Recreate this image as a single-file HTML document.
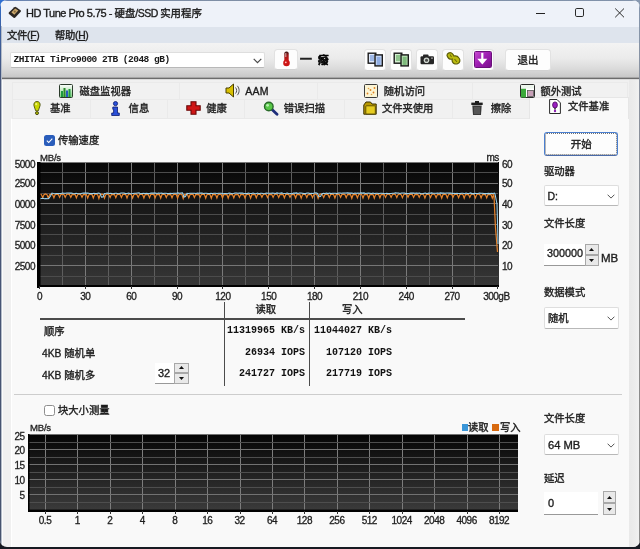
<!DOCTYPE html>
<html lang="zh">
<head>
<meta charset="utf-8">
<title>HD Tune Pro 5.75 - 硬盘/SSD 实用程序</title>
<style>
*{box-sizing:border-box;margin:0;padding:0}
html,body{width:640px;height:549px;overflow:hidden;background:#fff}
body{font-family:"Liberation Sans","Noto Sans CJK SC",sans-serif;font-size:11px;color:#1a1a1a;position:relative}
div,span,svg{position:absolute}
.t{white-space:nowrap;line-height:1;color:#1c1c1c;-webkit-text-stroke:0.35px #1c1c1c}
.btn{background:#fdfdfd;border:1px solid #e2e2e2;border-bottom-color:#d2d2d2;border-radius:3.5px}
.combo{background:#fff;border:1px solid #dedede;border-bottom:1px solid #b8b8b8;border-radius:2px}
.ax{font-size:10px;line-height:10px;color:#1e1e1e;white-space:nowrap;letter-spacing:-0.5px;-webkit-text-stroke:0.3px #1e1e1e}
.mono{font-family:"Liberation Mono","Noto Sans CJK SC",monospace;font-weight:bold;font-size:10px;white-space:nowrap;line-height:1;color:#111}
.lab{font-size:10.3px;white-space:nowrap;line-height:1;color:#1c1c1c;-webkit-text-stroke:0.35px #1c1c1c}
.tab{border:1px solid #eaeaea;border-bottom:none;background:#f1f1f1}
</style>
</head>
<body>
<div id="win" style="left:0;top:0;width:640px;height:549px;background:#8698b0;overflow:hidden;will-change:transform;opacity:0.999">
<div style="left:0;top:0;width:10px;height:10px;background:#2f6fd2"></div>
<div style="left:0;top:530px;width:640px;height:19px;background:#171a22"></div>
<div id="frame" style="left:0;top:0;width:640px;height:547px;background:#f0f0f0;border-radius:7px 8px 7px 7px;overflow:hidden">
<div style="left:0;top:0;width:640px;height:27px;background:#eef2f9"></div>
<div style="left:0;top:0;width:640px;height:1px;background:linear-gradient(90deg,#5f7fb8 0px,#7d8da4 60px,#8192aa 640px)"></div>
<svg style="left:8px;top:6px" width="14" height="13" viewBox="0 0 14 13"><path d="M0.800 6.500L6.300 1.200Q7.200 0.500 8.200 1.200L12.600 4.300Q13.300 5 12.700 5.800L7.300 11.600Q6.500 12.300 5.600 11.700L1 8Q0.300 7.200 0.800 6.500z" fill="#2b2622"/><path d="M3.300 6.300L7.200 2.500L10.300 4.600L6.300 8.800z" fill="#c9a76c"/><circle cx="6.800" cy="5.600" r="1.100" fill="#8a6a3a"/></svg>
<div class="t" style="left:26px;top:8px;font-size:10.4px;color:#1b1b1b"><span style="position:static;font-size:11px;letter-spacing:-0.49px">HD Tune Pro 5.75 - </span>硬盘<span style="position:static;font-size:10.5px;letter-spacing:-0.5px">/SSD </span>实用程序</div>
<div style="left:536px;top:12.6px;width:9px;height:1.1px;background:#222"></div>
<div style="left:575.2px;top:8.1px;width:9px;height:9px;border:1.1px solid #2a2a2a;border-radius:1.8px"></div>
<svg style="left:614px;top:7px" width="12" height="12" viewBox="0 0 12 12"><path d="M1.2 1.500 L10 10.300 M10 1.500 L1.200 10.300" stroke="#2a2a2a" stroke-width="1" fill="none"/></svg>
<div style="left:0;top:26.6px;width:640px;height:16.8px;background:#dee4ed"></div>
<div class="t" style="left:7px;top:30.8px;font-size:10.3px;letter-spacing:-0.3px">文件(<u>F</u>)</div>
<div class="t" style="left:55px;top:30.8px;font-size:10.3px;letter-spacing:-0.3px">帮助(<u>H</u>)</div>
<div style="left:0;top:43.3px;width:640px;height:33.7px;background:linear-gradient(#f3f3f3 0%,#ebebeb 45%,#dbdbdb 75%,#c8c8c8 100%)"></div>
<div style="left:0;top:77px;width:640px;height:1px;background:#a6a6a6"></div><div style="left:0;top:78px;width:640px;height:1px;background:#6c6c6c"></div><div style="left:0;top:79px;width:640px;height:1px;background:#dcdcdc"></div>
<div class="combo" style="left:10px;top:51.5px;width:254.5px;height:16px"></div>
<div class="mono" style="left:13.6px;top:54.7px;font-size:9.5px;letter-spacing:-0.5px;color:#1a1a1a">ZHITAI TiPro9000 2TB (2048 gB)</div>
<svg style="left:252.5px;top:57.5px" width="9" height="6" viewBox="0 0 9 6"><path d="M0.7 0.8 L4.5 4.6 L8.3 0.8" stroke="#4a4a4a" stroke-width="1.2" fill="none"/></svg>
<div class="btn" style="left:274px;top:48.8px;width:23.5px;height:21.4px"></div>
<svg style="left:281.5px;top:51px" width="9" height="16" viewBox="0 0 9 16"><defs><linearGradient id="th" x1="0" y1="0" x2="0" y2="1"><stop offset="0" stop-color="#3a1a1a"/><stop offset="0.35" stop-color="#a01818"/><stop offset="1" stop-color="#d81818"/></linearGradient></defs><rect x="2.300" y="0.600" width="4.400" height="11" rx="2" fill="url(#th)"/><circle cx="4.500" cy="12" r="3.300" fill="#cc1414"/><circle cx="3.800" cy="11.300" r="0.900" fill="#ffc0c0"/><rect x="3.300" y="2" width="1" height="4" fill="#d0b0b0"/></svg>
<div class="t" style="left:299.8px;top:54px;font-size:12.3px;font-weight:bold;color:#222">一</div>
<div class="t" style="left:318px;top:55.3px;font-size:10.6px;font-weight:bold;color:#000;-webkit-text-stroke:0.6px #000">癈</div>
<div class="btn" style="left:363.6px;top:48.5px;width:22.4px;height:22.3px"></div>
<div class="btn" style="left:389.6px;top:48.5px;width:22.4px;height:22.3px"></div>
<div class="btn" style="left:415.6px;top:48.5px;width:22.4px;height:22.3px"></div>
<div class="btn" style="left:441.6px;top:48.5px;width:22.4px;height:22.3px"></div>
<svg style="left:367px;top:52px" width="17" height="16" viewBox="0 0 17 16"><rect x="1.200" y="1.200" width="7.600" height="10" fill="#dfe9fb" stroke="#1a1a1a" stroke-width="1.400"/><path d="M3 4h4M3 6h4M3 8h4" stroke="#5f86d0" stroke-width="1"/><rect x="8" y="2.900" width="7.300" height="11" fill="#c4d6f6" stroke="#1a1a1a" stroke-width="1.400"/><path d="M9.800 6h3.800M9.800 8h3.800M9.800 10h3.800M9.800 12h3.800" stroke="#5f86d0" stroke-width="1"/></svg>
<svg style="left:393px;top:52px" width="17" height="16" viewBox="0 0 17 16"><rect x="1.200" y="1.200" width="7.600" height="10" fill="#d4efd0" stroke="#1a1a1a" stroke-width="1.400"/><path d="M3 4h4M3 6h4M3 8h4" stroke="#4a9a4a" stroke-width="1"/><rect x="8" y="2.900" width="7.300" height="11" fill="#b4dcb0" stroke="#1a1a1a" stroke-width="1.400"/><path d="M9.800 6h3.800M9.800 8h3.800M9.800 10h3.800M9.800 12h3.800" stroke="#4a9a4a" stroke-width="1"/></svg>
<svg style="left:420px;top:54px" width="15" height="11" viewBox="0 0 15 11"><rect x="0.500" y="2.300" width="13.500" height="8" rx="1.200" fill="#262626"/><rect x="3" y="0.500" width="5.500" height="3" rx="0.800" fill="#262626"/><circle cx="6.500" cy="6.200" r="2.800" fill="#cfd6cf"/><circle cx="6.500" cy="6.200" r="1.500" fill="#4a4a4a"/><rect x="11" y="3.500" width="2" height="1.300" fill="#9a9a9a"/></svg>
<svg style="left:445px;top:51px" width="17" height="16" viewBox="0 0 17 16"><path d="M2 4.500c0-2 2.500-3.500 4.500-2.500c1.500 0.800 2 2 2.500 3c2-0.500 4 0.500 5 2c1.500 2 1 4.500-1 5.500c-2 1-4.500 0.500-5.500-1.500c-0.500-1-0.500-2-0.300-2.800c-2 0.300-4.200-0.700-5.200-3.700z" fill="#bcbc10" stroke="#5e5e08" stroke-width="1.200"/><path d="M5 3.500l1.500 2.500M9.500 8l2.500 3" stroke="#70700a" stroke-width="1.100"/></svg>
<div class="btn" style="left:471.6px;top:48.5px;width:22.6px;height:22.3px"></div>
<div style="left:474px;top:51px;width:18px;height:17px;background:linear-gradient(135deg,#c84ad0 0%,#a020b4 45%,#7a0e8c 100%);border:1px solid #6a0f7a;border-radius:1.500px"></div>
<svg style="left:476px;top:52px" width="14" height="14" viewBox="0 0 14 14"><path d="M6.300 0.800v7" stroke="#fff" stroke-width="2.200" fill="none"/><path d="M1.300 6.800h10l-5 5.600z" fill="#fff"/></svg>
<div class="btn" style="left:505px;top:48.6px;width:46px;height:22.4px"></div>
<div class="t" style="left:517.5px;top:55px;font-size:10.5px">退出</div>
<div class="tab" style="left:12px;top:82px;width:168px;height:18px"></div>
<div class="tab" style="left:179px;top:82px;width:139px;height:18px"></div>
<div class="tab" style="left:317px;top:82px;width:156px;height:18px"></div>
<div class="tab" style="left:472px;top:82px;width:156px;height:18px"></div>
<div class="tab" style="left:12px;top:99px;width:79px;height:20px"></div>
<div class="tab" style="left:90px;top:99px;width:78px;height:20px"></div>
<div class="tab" style="left:167px;top:99px;width:78px;height:20px"></div>
<div class="tab" style="left:244px;top:99px;width:101px;height:20px"></div>
<div class="tab" style="left:344px;top:99px;width:109px;height:20px"></div>
<div class="tab" style="left:452px;top:99px;width:79px;height:20px"></div>
<div style="left:628.5px;top:80px;width:10.2px;height:467px;background:linear-gradient(90deg,#e9e9e9 0px,#ececec 5px,#f1f1f1 10px)"></div>
<div style="left:10.5px;top:118px;width:618px;height:429px;background:#f9f9f9;border-left:1px solid #fff;border-top:1px solid #e9e9e9"></div>
<div style="left:529px;top:97px;width:99.5px;height:22px;background:#f9f9f9;border:1px solid #e6e6e6;border-bottom:none"></div>
<svg style="left:59px;top:84px" width="14" height="14" viewBox="0 0 14 14"><defs><linearGradient id="gi1" x1="0" y1="0" x2="0" y2="1"><stop offset="0" stop-color="#ffffff"/><stop offset="1" stop-color="#7fd07f"/></linearGradient></defs><rect x="0.5" y="0.5" width="13" height="13" rx="1" fill="url(#gi1)" stroke="#2a3a2a"/><rect x="2" y="7" width="2" height="6" fill="#1e9a3e"/><rect x="4.500" y="4" width="2" height="9" fill="#2a8a2a"/><rect x="7" y="6.500" width="2" height="6.500" fill="#2a5ac0"/><rect x="9.500" y="5" width="2" height="8" fill="#1e9a3e"/></svg>
<div class="t" style="left:79.5px;top:86.6px;font-size:10.3px">磁盘监视器</div>
<svg style="left:225px;top:83px" width="15" height="15" viewBox="0 0 15 15"><path d="M1 5h3l4.500-4v13l-4.500-4h-3z" fill="#d8c000" stroke="#4a4000" stroke-width="1"/><path d="M10.500 4.500c1.500 1.500 1.500 4.500 0 6M12.300 2.800c2.400 2.600 2.400 6.800 0 9.400" stroke="#555" stroke-width="1" fill="none"/></svg>
<div class="t" style="left:245.3px;top:85.8px;font-size:10.5px;letter-spacing:0.2px">AAM</div>
<svg style="left:364px;top:84px" width="14" height="14" viewBox="0 0 14 14"><rect x="0.5" y="0.5" width="13" height="13" rx="1" fill="#fbf4d4" stroke="#3a3a3a"/><circle cx="3.500" cy="9.500" r="0.900" fill="#e08020"/><circle cx="6.500" cy="6" r="0.900" fill="#e08020"/><circle cx="9.500" cy="8.500" r="0.900" fill="#e08020"/><circle cx="10.500" cy="4" r="0.900" fill="#e08020"/><circle cx="4.500" cy="4.500" r="0.800" fill="#e0a040"/><circle cx="7.500" cy="10.500" r="0.800" fill="#e0a040"/></svg>
<div class="t" style="left:383.8px;top:86.6px;font-size:10.3px">随机访问</div>
<svg style="left:520px;top:84px" width="15" height="14" viewBox="0 0 15 14"><rect x="0.5" y="0.5" width="14" height="13" rx="1" fill="#fff" stroke="#2a2a2a"/><rect x="1" y="4.500" width="5" height="9" fill="#3aa83a"/><rect x="1" y="1" width="13" height="3.500" fill="#eef6ee"/><rect x="7.500" y="6.500" width="6" height="6" fill="#c8a0b8" stroke="#555" stroke-width="0.800"/></svg>
<div class="t" style="left:540.4px;top:86.6px;font-size:10.3px">额外测试</div>
<svg style="left:33px;top:101px" width="8" height="14" viewBox="0 0 8 14"><path d="M4 0.500C6.300 0.500 7.300 2.300 7.100 4.300C6.900 6.300 5.600 8 5.300 9.800L2.700 9.800C2.400 8 1.100 6.300 0.900 4.300C0.700 2.300 1.700 0.500 4 0.500z" fill="#c9d600" stroke="#4a4f0a" stroke-width="0.900"/><circle cx="3.200" cy="3.200" r="1.100" fill="#eef27a"/><circle cx="4" cy="12.100" r="1.500" fill="#b9c400" stroke="#3a3a0a" stroke-width="0.900"/></svg>
<div class="t" style="left:50px;top:104px;font-size:10.3px">基准</div>
<svg style="left:111px;top:100.500px" width="9" height="15" viewBox="0 0 9 15"><circle cx="4.500" cy="2.600" r="2.100" fill="#2a50d8" stroke="#0a1a70" stroke-width="0.800"/><path d="M1.800 6h4.700v6h1.800v2.500h-7.600v-2.500h1.900v-3.700h-0.800z" fill="#2a50d8" stroke="#0a1a70" stroke-width="0.800"/></svg>
<div class="t" style="left:128.6px;top:104px;font-size:10.3px">信息</div>
<svg style="left:186px;top:101px" width="15" height="14" viewBox="0 0 15 14"><path d="M5 0.800h5v4h4.200v4.500h-4.200v4h-5v-4h-4.200v-4.500h4.200z" fill="#cf1616" stroke="#6a0808" stroke-width="1.1"/></svg>
<div class="t" style="left:206.2px;top:104px;font-size:10.3px">健康</div>
<svg style="left:263px;top:100.500px" width="16" height="15" viewBox="0 0 16 15"><path d="M8.500 8L14 13.200" stroke="#1e2e7a" stroke-width="2.800" stroke-linecap="round"/><circle cx="5.800" cy="5.500" r="4.300" fill="#58c848" stroke="#2a6a2a" stroke-width="1.400"/><circle cx="4.600" cy="4.300" r="1.400" fill="#b8f0b0"/></svg>
<div class="t" style="left:283.8px;top:104px;font-size:10.3px">错误扫描</div>
<svg style="left:362.500px;top:101px" width="14" height="14" viewBox="0 0 14 14"><path d="M0.800 4l2.200-3h4.500l1.500 2h4.200v10.200h-12.400z" fill="#b89800" stroke="#3a3000" stroke-width="1"/><rect x="2.800" y="4.800" width="9.500" height="8.200" rx="0.800" fill="#e6cc20" stroke="#4a3e00" stroke-width="0.800"/></svg>
<div class="t" style="left:381.9px;top:104px;font-size:10.3px">文件夹使用</div>
<svg style="left:471px;top:101px" width="12" height="14" viewBox="0 0 12 14"><rect x="0.300" y="1.600" width="11.400" height="2.400" fill="#1e1e1e"/><rect x="4" y="0" width="4" height="2" fill="#1e1e1e"/><path d="M1.300 4.600h9.400l-0.700 9.400h-8z" fill="#3a3a3a"/><path d="M4 6v7M6 6v7M8 6v7" stroke="#8a8a8a" stroke-width="0.700"/></svg>
<div class="t" style="left:490.8px;top:104px;font-size:10.3px">擦除</div>
<svg style="left:549px;top:98.500px" width="12" height="15" viewBox="0 0 12 15"><path d="M0.600 0.500h7.400l3.400 3.400v10.600h-10.800z" fill="#fff" stroke="#2a2a2a" stroke-width="1"/><ellipse cx="6" cy="6" rx="2.400" ry="3.100" fill="#9a20c0" stroke="#4a0a5a" stroke-width="0.800"/><rect x="5" y="9" width="2" height="1.600" fill="#555"/><circle cx="6" cy="12" r="1.200" fill="#8a20b0"/></svg>
<div class="t" style="left:568px;top:101.6px;font-size:10.3px">文件基准</div>
<div style="left:44px;top:134.7px;width:11px;height:11px;background:#2a5dbb;border-radius:2.500px"></div>
<svg style="left:44px;top:134.7px" width="11" height="11" viewBox="0 0 11 11"><path d="M2.800 5.700L4.700 7.500L8.300 3.600" stroke="#fff" stroke-width="1.100" fill="none"/></svg>
<div class="lab" style="left:58px;top:136.3px">传输速度</div>
<div class="ax" style="left:40px;top:153.1px;letter-spacing:-0.25px;font-size:9.6px">MB/s</div>
<div class="ax" style="left:486.5px;top:152.6px">ms</div>
<svg style="left:39px;top:162px" width="460" height="125" viewBox="0 0 460 125"><defs><linearGradient id="g1" x1="0" y1="0" x2="0" y2="1"><stop offset="0" stop-color="#060606"/><stop offset="1" stop-color="#373737"/></linearGradient></defs><rect x="0" y="0" width="460" height="125" fill="url(#g1)"/><line x1="23.5" y1="0" x2="23.5" y2="124" stroke="#5e5e5e" stroke-width="1"/><line x1="46.5" y1="0" x2="46.5" y2="124" stroke="#7a7a7a" stroke-width="1"/><line x1="69.5" y1="0" x2="69.5" y2="124" stroke="#5e5e5e" stroke-width="1"/><line x1="92.5" y1="0" x2="92.5" y2="124" stroke="#7a7a7a" stroke-width="1"/><line x1="115.5" y1="0" x2="115.5" y2="124" stroke="#5e5e5e" stroke-width="1"/><line x1="138.5" y1="0" x2="138.5" y2="124" stroke="#7a7a7a" stroke-width="1"/><line x1="160.5" y1="0" x2="160.5" y2="124" stroke="#5e5e5e" stroke-width="1"/><line x1="183.5" y1="0" x2="183.5" y2="124" stroke="#7a7a7a" stroke-width="1"/><line x1="206.5" y1="0" x2="206.5" y2="124" stroke="#5e5e5e" stroke-width="1"/><line x1="229.5" y1="0" x2="229.5" y2="124" stroke="#7a7a7a" stroke-width="1"/><line x1="252.5" y1="0" x2="252.5" y2="124" stroke="#5e5e5e" stroke-width="1"/><line x1="275.5" y1="0" x2="275.5" y2="124" stroke="#7a7a7a" stroke-width="1"/><line x1="298.5" y1="0" x2="298.5" y2="124" stroke="#5e5e5e" stroke-width="1"/><line x1="321.5" y1="0" x2="321.5" y2="124" stroke="#7a7a7a" stroke-width="1"/><line x1="344.5" y1="0" x2="344.5" y2="124" stroke="#5e5e5e" stroke-width="1"/><line x1="367.5" y1="0" x2="367.5" y2="124" stroke="#7a7a7a" stroke-width="1"/><line x1="390.5" y1="0" x2="390.5" y2="124" stroke="#5e5e5e" stroke-width="1"/><line x1="413.5" y1="0" x2="413.5" y2="124" stroke="#7a7a7a" stroke-width="1"/><line x1="435.5" y1="0" x2="435.5" y2="124" stroke="#5e5e5e" stroke-width="1"/><line x1="0" y1="0.5" x2="459" y2="0.5" stroke="#767676" stroke-width="1"/><line x1="0" y1="10.5" x2="459" y2="10.5" stroke="#4c4c4c" stroke-width="1"/><line x1="0" y1="21.5" x2="459" y2="21.5" stroke="#767676" stroke-width="1"/><line x1="0" y1="31.5" x2="459" y2="31.5" stroke="#4c4c4c" stroke-width="1"/><line x1="0" y1="41.5" x2="459" y2="41.5" stroke="#767676" stroke-width="1"/><line x1="0" y1="52.5" x2="459" y2="52.5" stroke="#4c4c4c" stroke-width="1"/><line x1="0" y1="62.5" x2="459" y2="62.5" stroke="#767676" stroke-width="1"/><line x1="0" y1="72.5" x2="459" y2="72.5" stroke="#4c4c4c" stroke-width="1"/><line x1="0" y1="83.5" x2="459" y2="83.5" stroke="#767676" stroke-width="1"/><line x1="0" y1="93.5" x2="459" y2="93.5" stroke="#4c4c4c" stroke-width="1"/><line x1="0" y1="103.5" x2="459" y2="103.5" stroke="#767676" stroke-width="1"/><line x1="0" y1="114.5" x2="459" y2="114.5" stroke="#4c4c4c" stroke-width="1"/><polyline fill="none" stroke="#e8842c" stroke-width="1.2" points="0.8,32.0 2.4,32.6 3.7,35.7 5.0,32.6 6.4,31.9 8.0,32.6 9.3,36.1 10.6,32.6 12.0,32.1 13.6,32.6 14.9,35.9 16.2,32.6 17.7,32.2 19.3,32.6 20.6,35.4 21.9,32.6 23.3,32.2 24.9,32.6 26.2,35.3 27.5,32.6 28.9,32.0 30.5,32.6 31.8,35.4 33.1,32.6 34.5,32.4 36.1,32.6 37.4,35.8 38.7,32.6 40.1,32.0 41.7,32.6 43.0,35.4 44.3,32.6 45.8,32.5 47.4,32.6 48.7,36.1 50.0,32.6 51.4,32.1 53.0,32.6 54.3,36.0 55.6,32.6 57.0,31.9 58.6,32.6 59.9,36.5 61.2,32.6 62.6,32.1 64.2,32.6 65.5,36.3 66.8,32.6 68.2,32.0 69.8,32.6 71.1,35.5 72.4,32.6 73.9,32.4 75.5,32.6 76.8,35.7 78.1,32.6 79.5,32.2 81.1,32.6 82.4,35.5 83.7,32.6 85.1,32.1 86.7,32.6 88.0,36.1 89.3,32.6 90.7,31.9 92.3,32.6 93.6,36.0 94.9,32.6 96.3,32.0 97.9,32.6 99.2,35.4 100.5,32.6 102.0,32.2 103.6,32.6 104.9,36.1 106.2,32.6 107.6,32.3 109.2,32.6 110.5,35.7 111.8,32.6 113.2,32.1 114.8,32.6 116.1,35.8 117.4,32.6 118.8,32.3 120.4,32.6 121.7,36.3 123.0,32.6 124.4,32.2 126.0,32.6 127.3,35.6 128.6,32.6 130.1,32.4 131.7,32.6 133.0,35.9 134.3,32.6 135.7,32.1 137.3,32.6 138.6,36.2 139.9,32.6 141.3,32.0 142.9,32.6 144.2,36.5 145.5,32.6 146.9,32.4 148.5,32.6 149.8,35.8 151.1,32.6 152.5,32.2 154.1,32.6 155.4,35.5 156.7,32.6 158.2,32.3 159.8,32.6 161.1,35.3 162.4,32.6 163.8,32.2 165.4,32.6 166.7,36.2 168.0,32.6 169.4,32.1 171.0,32.6 172.3,36.4 173.6,32.6 175.0,32.3 176.6,32.6 177.9,36.1 179.2,32.6 180.6,32.2 182.2,32.6 183.5,36.0 184.8,32.6 186.3,32.5 187.9,32.6 189.2,36.3 190.5,32.6 191.9,32.3 193.5,32.6 194.8,35.9 196.1,32.6 197.5,32.3 199.1,32.6 200.4,35.4 201.7,32.6 203.1,32.5 204.7,32.6 206.0,36.1 207.3,32.6 208.7,32.1 210.3,32.6 211.6,36.3 212.9,32.6 214.4,32.3 216.0,32.6 217.3,35.8 218.6,32.6 220.0,32.2 221.6,32.6 222.9,35.3 224.2,32.6 225.6,32.0 227.2,32.6 228.5,35.5 229.8,32.6 231.2,32.4 232.8,32.6 234.1,35.4 235.4,32.6 236.8,32.0 238.4,32.6 239.7,35.5 241.0,32.6 242.5,32.4 244.1,32.6 245.4,35.8 246.7,32.6 248.1,32.2 249.7,32.6 251.0,35.4 252.3,32.6 253.7,32.4 255.3,32.6 256.6,36.0 257.9,32.6 259.3,32.4 260.9,32.6 262.2,36.3 263.5,32.6 264.9,32.1 266.5,32.6 267.8,35.6 269.1,32.6 270.6,32.4 272.2,32.6 273.5,35.7 274.8,32.6 276.2,32.0 277.8,32.6 279.1,36.4 280.4,32.6 281.8,32.0 283.4,32.6 284.7,35.5 286.0,32.6 287.4,32.2 289.0,32.6 290.3,35.6 291.6,32.6 293.0,32.1 294.6,32.6 295.9,36.0 297.2,32.6 298.7,32.2 300.3,32.6 301.6,35.3 302.9,32.6 304.3,32.2 305.9,32.6 307.2,35.7 308.5,32.6 309.9,32.3 311.5,32.6 312.8,36.4 314.1,32.6 315.5,32.3 317.1,32.6 318.4,35.9 319.7,32.6 321.1,31.9 322.7,32.6 324.0,36.1 325.3,32.6 326.8,32.4 328.4,32.6 329.7,36.4 331.0,32.6 332.4,32.4 334.0,32.6 335.3,36.3 336.6,32.6 338.0,32.1 339.6,32.6 340.9,35.8 342.2,32.6 343.6,32.3 345.2,32.6 346.5,35.4 347.8,32.6 349.2,31.9 350.8,32.6 352.1,35.4 353.4,32.6 354.9,32.0 356.5,32.6 357.8,35.6 359.1,32.6 360.5,31.9 362.1,32.6 363.4,35.7 364.7,32.6 366.1,32.0 367.7,32.6 369.0,35.3 370.3,32.6 371.7,32.1 373.3,32.6 374.6,35.4 375.9,32.6 377.3,32.4 378.9,32.6 380.2,35.3 381.5,32.6 383.0,32.0 384.6,32.6 385.9,36.0 387.2,32.6 388.6,32.1 390.2,32.6 391.5,35.6 392.8,32.6 394.2,32.0 395.8,32.6 397.1,35.7 398.4,32.6 399.8,32.5 401.4,32.6 402.7,36.3 404.0,32.6 405.4,32.2 407.0,32.6 408.3,35.9 409.6,32.6 411.1,32.0 412.7,32.6 414.0,35.4 415.3,32.6 416.7,32.1 418.3,32.6 419.6,35.7 420.9,32.6 422.3,32.0 423.9,32.6 425.2,36.3 426.5,32.6 427.9,32.5 429.5,32.6 430.8,35.3 432.1,32.6 433.5,32.0 435.1,32.6 436.4,35.9 437.7,32.6 439.2,31.9 440.8,32.6 442.1,36.0 443.4,32.6 444.8,32.5 446.4,32.6 447.7,35.9 449.0,32.6 450.4,32.3 452.0,32.6 453.3,36.3 454.6,32.6 454.0,32.5 455.0,34.0 456.5,66.0 458.5,90.0"/><polyline fill="none" stroke="#9ad2ee" stroke-width="1.05" points="0.5,40.0 1.0,36.3 2.5,36.4 4.0,36.2 5.5,36.8 7.0,36.5 8.5,36.8 10.0,36.3 11.5,34.0 13.0,31.1 14.5,31.5 16.0,31.7 17.5,31.6 19.0,31.5 20.5,31.6 22.0,31.5 23.5,31.1 25.0,31.3 26.5,31.2 28.0,30.9 29.5,30.9 31.0,31.1 32.5,31.1 34.0,31.5 35.5,31.7 37.0,31.3 38.5,31.6 40.0,31.7 41.5,31.7 43.0,31.2 44.5,31.1 46.0,31.1 47.5,31.1 49.0,31.1 50.5,31.4 52.0,31.6 53.5,31.6 55.0,31.3 56.5,31.4 58.0,31.5 59.5,31.0 61.0,31.4 62.5,35.1 64.0,35.0 65.5,31.5 67.0,31.3 68.5,31.0 70.0,31.5 71.5,31.2 73.0,31.5 74.5,31.7 76.0,31.2 77.5,31.2 79.0,31.7 80.5,31.5 82.0,31.0 83.5,31.0 85.0,31.0 86.5,31.6 88.0,31.5 89.5,31.0 91.0,31.6 92.5,31.7 94.0,31.4 95.5,31.2 97.0,31.3 98.5,31.0 100.0,30.9 101.5,31.7 103.0,31.4 104.5,31.3 106.0,31.6 107.5,31.2 109.0,31.6 110.5,31.6 112.0,31.1 113.5,31.1 115.0,31.1 116.5,31.1 118.0,31.4 119.5,31.1 121.0,31.2 122.5,31.0 124.0,31.6 125.5,31.2 127.0,31.3 128.5,31.4 130.0,31.6 131.5,31.2 133.0,31.6 134.5,31.3 136.0,31.3 137.5,31.3 139.0,30.9 140.5,31.3 142.0,31.0 143.5,30.9 145.0,35.0 146.5,34.5 148.0,31.3 149.5,31.5 151.0,31.3 152.5,31.2 154.0,31.3 155.5,31.3 157.0,31.5 158.5,31.0 160.0,31.3 161.5,31.1 163.0,31.1 164.5,31.5 166.0,31.3 167.5,31.3 169.0,31.5 170.5,31.6 172.0,31.3 173.5,31.4 175.0,31.3 176.5,31.3 178.0,31.5 179.5,31.3 181.0,31.3 182.5,31.3 184.0,31.7 185.5,31.5 187.0,31.6 188.5,31.7 190.0,31.1 191.5,31.3 193.0,31.7 194.5,31.6 196.0,31.0 197.5,31.0 199.0,31.3 200.5,31.0 202.0,31.1 203.5,31.0 205.0,31.4 206.5,31.5 208.0,31.6 209.5,31.0 211.0,31.5 212.5,31.4 214.0,31.0 215.5,31.6 217.0,31.7 218.5,31.1 220.0,31.7 221.5,31.2 223.0,31.3 224.5,31.7 226.0,31.6 227.5,31.0 229.0,31.2 230.5,31.3 232.0,31.2 233.5,31.1 235.0,31.2 236.5,31.5 238.0,30.9 239.5,31.3 241.0,31.3 242.5,30.9 244.0,31.2 245.5,31.4 247.0,31.3 248.5,31.0 250.0,31.7 251.5,31.5 253.0,31.7 254.5,31.0 256.0,31.1 257.5,30.9 259.0,31.5 260.5,31.1 262.0,31.0 263.5,31.2 265.0,31.6 266.5,31.6 268.0,31.1 269.5,31.0 271.0,31.6 272.5,31.4 274.0,31.5 275.5,31.0 277.0,30.9 278.5,31.5 280.0,34.7 281.5,34.5 283.0,31.7 284.5,31.4 286.0,31.5 287.5,31.0 289.0,31.6 290.5,31.0 292.0,31.6 293.5,31.3 295.0,31.2 296.5,31.3 298.0,31.6 299.5,31.1 301.0,31.0 302.5,31.3 304.0,31.1 305.5,31.0 307.0,31.0 308.5,30.9 310.0,31.1 311.5,31.1 313.0,31.1 314.5,31.5 316.0,31.1 317.5,31.3 319.0,31.0 320.5,31.2 322.0,30.9 323.5,31.1 325.0,30.9 326.5,31.5 328.0,31.3 329.5,31.1 331.0,31.3 332.5,31.6 334.0,31.0 335.5,31.6 337.0,31.2 338.5,31.3 340.0,31.6 341.5,31.2 343.0,31.3 344.5,31.5 346.0,31.7 347.5,31.2 349.0,31.6 350.5,31.5 352.0,31.4 353.5,31.2 355.0,31.2 356.5,30.9 358.0,31.0 359.5,31.0 361.0,31.5 362.5,31.1 364.0,31.0 365.5,31.0 367.0,31.6 368.5,31.6 370.0,31.4 371.5,31.1 373.0,31.1 374.5,31.1 376.0,31.3 377.5,31.0 379.0,31.3 380.5,31.1 382.0,31.7 383.5,31.7 385.0,31.3 386.5,31.1 388.0,31.7 389.5,31.1 391.0,31.2 392.5,30.9 394.0,31.2 395.5,31.3 397.0,31.3 398.5,31.1 400.0,31.3 401.5,30.9 403.0,31.1 404.5,31.0 406.0,31.2 407.5,30.9 409.0,30.9 410.5,31.1 412.0,31.1 413.5,31.4 415.0,31.3 416.5,31.5 418.0,31.4 419.5,31.5 421.0,31.6 422.5,31.2 424.0,31.2 425.5,31.7 427.0,31.0 428.5,31.5 430.0,31.4 431.5,30.9 433.0,31.6 434.5,31.6 436.0,31.4 437.5,31.5 439.0,31.5 440.5,31.0 442.0,31.3 443.5,31.3 445.0,31.6 446.5,31.5 448.0,31.6 449.5,31.4 451.0,31.6 452.5,31.4 454.0,31.5 455.5,31.1 456.0,32.0 458.0,42.0 458.5,60.0 459.0,82.0"/><rect x="0" y="0" width="1.500" height="125" fill="#000"/><rect x="0" y="123" width="460" height="2" fill="#000"/></svg>
<div style="left:37.3px;top:162px;width:2px;height:125.5px;background:#000"></div>
<div class="ax" style="left:9px;width:26px;text-align:right;top:159.8px">5000</div>
<div class="ax" style="left:9px;width:26px;text-align:right;top:179.2px">2500</div>
<div class="ax" style="left:9px;width:26px;text-align:right;top:199.8px">0000</div>
<div class="ax" style="left:9px;width:26px;text-align:right;top:220.5px">7500</div>
<div class="ax" style="left:9px;width:26px;text-align:right;top:241.0px">5000</div>
<div class="ax" style="left:9px;width:26px;text-align:right;top:261.5px">2500</div>
<div class="ax" style="left:502px;top:159.8px">60</div>
<div class="ax" style="left:502px;top:179.2px">50</div>
<div class="ax" style="left:502px;top:199.8px">40</div>
<div class="ax" style="left:502px;top:220.5px">30</div>
<div class="ax" style="left:502px;top:241.0px">20</div>
<div class="ax" style="left:502px;top:261.5px">10</div>
<div class="ax" style="left:24.5px;width:30px;text-align:center;top:291.5px">0</div>
<div style="left:39.0px;top:286px;width:1px;height:3px;background:#333"></div>
<div class="ax" style="left:70.3px;width:30px;text-align:center;top:291.5px">30</div>
<div style="left:84.8px;top:286px;width:1px;height:3px;background:#333"></div>
<div class="ax" style="left:116.2px;width:30px;text-align:center;top:291.5px">60</div>
<div style="left:130.7px;top:286px;width:1px;height:3px;background:#333"></div>
<div class="ax" style="left:162.0px;width:30px;text-align:center;top:291.5px">90</div>
<div style="left:176.5px;top:286px;width:1px;height:3px;background:#333"></div>
<div class="ax" style="left:207.9px;width:30px;text-align:center;top:291.5px">120</div>
<div style="left:222.4px;top:286px;width:1px;height:3px;background:#333"></div>
<div class="ax" style="left:253.7px;width:30px;text-align:center;top:291.5px">150</div>
<div style="left:268.2px;top:286px;width:1px;height:3px;background:#333"></div>
<div class="ax" style="left:299.5px;width:30px;text-align:center;top:291.5px">180</div>
<div style="left:314.0px;top:286px;width:1px;height:3px;background:#333"></div>
<div class="ax" style="left:345.4px;width:30px;text-align:center;top:291.5px">210</div>
<div style="left:359.9px;top:286px;width:1px;height:3px;background:#333"></div>
<div class="ax" style="left:391.2px;width:30px;text-align:center;top:291.5px">240</div>
<div style="left:405.7px;top:286px;width:1px;height:3px;background:#333"></div>
<div class="ax" style="left:437.1px;width:30px;text-align:center;top:291.5px">270</div>
<div style="left:451.6px;top:286px;width:1px;height:3px;background:#333"></div>
<div class="ax" style="left:481.4px;width:30px;text-align:center;top:291.5px">300gB</div>
<div style="left:497.4px;top:286px;width:1px;height:3px;background:#333"></div>
<div style="left:40px;top:318.2px;width:425px;height:1.5px;background:#4c4c4c"></div>
<div style="left:223.5px;top:302px;width:1.5px;height:84px;background:#4c4c4c"></div>
<div style="left:308.5px;top:302px;width:1.5px;height:84px;background:#4c4c4c"></div>
<div class="lab" style="left:255.5px;top:305.3px">读取</div>
<div class="lab" style="left:342px;top:305.3px">写入</div>
<div class="lab" style="left:44px;top:326.8px">顺序</div>
<div class="lab" style="left:42px;top:349.1px">4KB 随机单</div>
<div class="lab" style="left:42px;top:370.5px">4KB 随机多</div>
<div class="mono" style="left:185px;width:120px;text-align:right;top:325.5px">11319965 KB/s</div>
<div class="mono" style="left:185px;width:120px;text-align:right;top:347.5px">26934 IOPS</div>
<div class="mono" style="left:185px;width:120px;text-align:right;top:369px">241727 IOPS</div>
<div class="mono" style="left:272px;width:120px;text-align:right;top:325.5px">11044027 KB/s</div>
<div class="mono" style="left:272px;width:120px;text-align:right;top:347.5px">107120 IOPS</div>
<div class="mono" style="left:272px;width:120px;text-align:right;top:369px">217719 IOPS</div>
<div style="left:155px;top:362.5px;width:19.5px;height:21.5px;background:#fff;border-bottom:1px solid #999"></div>
<div class="t" style="left:158px;top:368px;font-size:11px">32</div>
<div style="left:174px;top:362.5px;width:14.5px;height:10.75px;background:#e9e9e9;border:1px solid #a8a8a8"></div>
<div style="left:174px;top:373.25px;width:14.5px;height:10.75px;background:#e9e9e9;border:1px solid #a8a8a8"></div>
<svg style="left:178.75px;top:366.375px" width="5" height="3" viewBox="0 0 5 3"><path d="M0 3L2.500 0L5 3z" fill="#111"/></svg>
<svg style="left:178.75px;top:377.125px" width="5" height="3" viewBox="0 0 5 3"><path d="M0 0L2.500 3L5 0z" fill="#111"/></svg>
<div style="left:14px;top:393.5px;width:608px;height:1px;background:#cdcdcd"></div>
<div style="left:44px;top:404.5px;width:11px;height:11px;background:#fff;border:1px solid #8e8e8e;border-radius:2.500px"></div>
<div class="lab" style="left:58px;top:405.7px">块大小测量</div>
<div class="ax" style="left:30px;top:422.8px;letter-spacing:-0.25px;font-size:9.6px">MB/s</div>
<div style="left:462px;top:424px;width:6px;height:7px;background:#3a96d8"></div>
<div class="lab" style="left:468px;top:423.3px">读取</div>
<div style="left:492px;top:424px;width:7px;height:7px;background:#d86a10"></div>
<div class="lab" style="left:500px;top:423.3px">写入</div>
<svg style="left:28px;top:434px" width="490" height="78" viewBox="0 0 490 78"><defs><linearGradient id="g2" x1="0" y1="0" x2="0" y2="1"><stop offset="0" stop-color="#050505"/><stop offset="1" stop-color="#3c3c3c"/></linearGradient></defs><rect x="0" y="0" width="490" height="78" fill="url(#g2)"/><line x1="17.5" y1="0" x2="17.5" y2="77" stroke="#7c7c7c" stroke-width="1"/><line x1="49.5" y1="0" x2="49.5" y2="77" stroke="#7c7c7c" stroke-width="1"/><line x1="82.5" y1="0" x2="82.5" y2="77" stroke="#7c7c7c" stroke-width="1"/><line x1="114.5" y1="0" x2="114.5" y2="77" stroke="#7c7c7c" stroke-width="1"/><line x1="147.5" y1="0" x2="147.5" y2="77" stroke="#7c7c7c" stroke-width="1"/><line x1="179.5" y1="0" x2="179.5" y2="77" stroke="#7c7c7c" stroke-width="1"/><line x1="212.5" y1="0" x2="212.5" y2="77" stroke="#7c7c7c" stroke-width="1"/><line x1="244.5" y1="0" x2="244.5" y2="77" stroke="#7c7c7c" stroke-width="1"/><line x1="276.5" y1="0" x2="276.5" y2="77" stroke="#7c7c7c" stroke-width="1"/><line x1="309.5" y1="0" x2="309.5" y2="77" stroke="#7c7c7c" stroke-width="1"/><line x1="341.5" y1="0" x2="341.5" y2="77" stroke="#7c7c7c" stroke-width="1"/><line x1="374.5" y1="0" x2="374.5" y2="77" stroke="#7c7c7c" stroke-width="1"/><line x1="406.5" y1="0" x2="406.5" y2="77" stroke="#7c7c7c" stroke-width="1"/><line x1="439.5" y1="0" x2="439.5" y2="77" stroke="#7c7c7c" stroke-width="1"/><line x1="471.5" y1="0" x2="471.5" y2="77" stroke="#7c7c7c" stroke-width="1"/><line x1="0" y1="0.5" x2="490" y2="0.5" stroke="#727272" stroke-width="1"/><line x1="0" y1="8.5" x2="490" y2="8.5" stroke="#4e4e4e" stroke-width="1"/><line x1="0" y1="15.5" x2="490" y2="15.5" stroke="#727272" stroke-width="1"/><line x1="0" y1="23.5" x2="490" y2="23.5" stroke="#4e4e4e" stroke-width="1"/><line x1="0" y1="30.5" x2="490" y2="30.5" stroke="#727272" stroke-width="1"/><line x1="0" y1="38.5" x2="490" y2="38.5" stroke="#4e4e4e" stroke-width="1"/><line x1="0" y1="45.5" x2="490" y2="45.5" stroke="#727272" stroke-width="1"/><line x1="0" y1="53.5" x2="490" y2="53.5" stroke="#4e4e4e" stroke-width="1"/><line x1="0" y1="60.5" x2="490" y2="60.5" stroke="#727272" stroke-width="1"/><line x1="0" y1="68.5" x2="490" y2="68.5" stroke="#4e4e4e" stroke-width="1"/><rect x="0" y="0" width="1.500" height="78" fill="#000"/><rect x="0" y="75.6" width="490" height="2.5" fill="#000"/></svg>
<div class="ax" style="left:4px;width:20.5px;text-align:right;top:431.5px">25</div>
<div class="ax" style="left:4px;width:20.5px;text-align:right;top:446.2px">20</div>
<div class="ax" style="left:4px;width:20.5px;text-align:right;top:461.0px">15</div>
<div class="ax" style="left:4px;width:20.5px;text-align:right;top:475.8px">10</div>
<div class="ax" style="left:4px;width:20.5px;text-align:right;top:490.5px">5</div>
<div class="ax" style="left:30.0px;width:30px;text-align:center;top:515.6px">0.5</div>
<div style="left:45px;top:511px;width:1px;height:3px;background:#333"></div>
<div class="ax" style="left:62.4px;width:30px;text-align:center;top:515.6px">1</div>
<div style="left:77px;top:511px;width:1px;height:3px;background:#333"></div>
<div class="ax" style="left:94.9px;width:30px;text-align:center;top:515.6px">2</div>
<div style="left:110px;top:511px;width:1px;height:3px;background:#333"></div>
<div class="ax" style="left:127.3px;width:30px;text-align:center;top:515.6px">4</div>
<div style="left:142px;top:511px;width:1px;height:3px;background:#333"></div>
<div class="ax" style="left:159.7px;width:30px;text-align:center;top:515.6px">8</div>
<div style="left:175px;top:511px;width:1px;height:3px;background:#333"></div>
<div class="ax" style="left:192.2px;width:30px;text-align:center;top:515.6px">16</div>
<div style="left:207px;top:511px;width:1px;height:3px;background:#333"></div>
<div class="ax" style="left:224.6px;width:30px;text-align:center;top:515.6px">32</div>
<div style="left:240px;top:511px;width:1px;height:3px;background:#333"></div>
<div class="ax" style="left:257.0px;width:30px;text-align:center;top:515.6px">64</div>
<div style="left:272px;top:511px;width:1px;height:3px;background:#333"></div>
<div class="ax" style="left:289.4px;width:30px;text-align:center;top:515.6px">128</div>
<div style="left:304px;top:511px;width:1px;height:3px;background:#333"></div>
<div class="ax" style="left:321.9px;width:30px;text-align:center;top:515.6px">256</div>
<div style="left:337px;top:511px;width:1px;height:3px;background:#333"></div>
<div class="ax" style="left:354.3px;width:30px;text-align:center;top:515.6px">512</div>
<div style="left:369px;top:511px;width:1px;height:3px;background:#333"></div>
<div class="ax" style="left:386.7px;width:30px;text-align:center;top:515.6px">1024</div>
<div style="left:402px;top:511px;width:1px;height:3px;background:#333"></div>
<div class="ax" style="left:419.2px;width:30px;text-align:center;top:515.6px">2048</div>
<div style="left:434px;top:511px;width:1px;height:3px;background:#333"></div>
<div class="ax" style="left:451.6px;width:30px;text-align:center;top:515.6px">4096</div>
<div style="left:467px;top:511px;width:1px;height:3px;background:#333"></div>
<div class="ax" style="left:484.0px;width:30px;text-align:center;top:515.6px">8192</div>
<div style="left:499px;top:511px;width:1px;height:3px;background:#333"></div>
<div style="left:544.3px;top:132px;width:74.2px;height:23.6px;background:#fdfdfd;border:1px solid #4a7fd0;border-bottom-color:#4a6aa8;border-radius:3px"></div>
<div style="left:545.3px;top:133px;width:72.2px;height:21.6px;border:1px dotted #707070;border-radius:2px"></div>
<div class="t" style="left:570.7px;top:139px;font-size:10.5px">开始</div>
<div class="lab" style="left:544px;top:167.4px">驱动器</div>
<div class="combo" style="left:543.5px;top:185px;width:75px;height:20.5px"></div>
<div class="t" style="left:547.5px;top:190.5px;font-size:10.5px">D:</div>
<svg style="left:607px;top:193.5px" width="8" height="5" viewBox="0 0 8 5"><path d="M0.6 0.7 L4 4.100 L7.400 0.7" stroke="#555" stroke-width="1" fill="none"/></svg>
<div class="lab" style="left:544px;top:219.1px">文件长度</div>
<div style="left:544px;top:243.5px;width:41px;height:22px;background:#fff;border-bottom:1px solid #999"></div>
<div class="t" style="left:547px;top:247.6px;font-size:10.8px">300000</div>
<div style="left:584.5px;top:243.5px;width:14px;height:11.0px;background:#e9e9e9;border:1px solid #a8a8a8"></div>
<div style="left:584.5px;top:254.5px;width:14px;height:11.0px;background:#e9e9e9;border:1px solid #a8a8a8"></div>
<svg style="left:589.0px;top:247.5px" width="5" height="3" viewBox="0 0 5 3"><path d="M0 3L2.500 0L5 3z" fill="#111"/></svg>
<svg style="left:589.0px;top:258.5px" width="5" height="3" viewBox="0 0 5 3"><path d="M0 0L2.500 3L5 0z" fill="#111"/></svg>
<div class="t" style="left:601px;top:253px;font-size:11.500px">MB</div>
<div class="lab" style="left:544px;top:288.2px">数据模式</div>
<div class="combo" style="left:543.5px;top:307px;width:75px;height:21.5px"></div>
<div class="t" style="left:548px;top:313.8px;font-size:10.3px">随机</div>
<svg style="left:607px;top:315.5px" width="8" height="5" viewBox="0 0 8 5"><path d="M0.6 0.7 L4 4.100 L7.400 0.7" stroke="#555" stroke-width="1" fill="none"/></svg>
<div class="lab" style="left:544px;top:413.8px">文件长度</div>
<div class="combo" style="left:543.5px;top:434.3px;width:75px;height:20.7px"></div>
<div class="t" style="left:548px;top:439.5px;font-size:11.2px">64 MB</div>
<svg style="left:607px;top:442.5px" width="8" height="5" viewBox="0 0 8 5"><path d="M0.6 0.7 L4 4.100 L7.400 0.7" stroke="#555" stroke-width="1" fill="none"/></svg>
<div class="lab" style="left:544px;top:473.6px">延迟</div>
<div style="left:544px;top:492px;width:54px;height:23px;background:#fff;border-bottom:1px solid #999"></div>
<div class="t" style="left:548px;top:498px;font-size:11px">0</div>
<div style="left:603px;top:491px;width:13px;height:12.0px;background:#e9e9e9;border:1px solid #a8a8a8"></div>
<div style="left:603px;top:503.0px;width:13px;height:12.0px;background:#e9e9e9;border:1px solid #a8a8a8"></div>
<svg style="left:607.0px;top:495.5px" width="5" height="3" viewBox="0 0 5 3"><path d="M0 3L2.500 0L5 3z" fill="#111"/></svg>
<svg style="left:607.0px;top:507.5px" width="5" height="3" viewBox="0 0 5 3"><path d="M0 0L2.500 3L5 0z" fill="#111"/></svg>
<div style="left:0;top:0;width:1px;height:547px;background:linear-gradient(#2f6fd2 0px,#3a62a8 24px,#46557a 80px,#46536e 547px)"></div>
<div style="left:1px;top:26px;width:1px;height:521px;background:#b4bcc8"></div>
<div style="left:2px;top:80px;width:1px;height:467px;background:#fbfbfb"></div>
<div style="left:638.7px;top:0;width:1.3px;height:547px;background:linear-gradient(#8496ae 0px,#8a92a0 80px,#8c8c8c 300px)"></div>
</div>
</div>
</body>
</html>
